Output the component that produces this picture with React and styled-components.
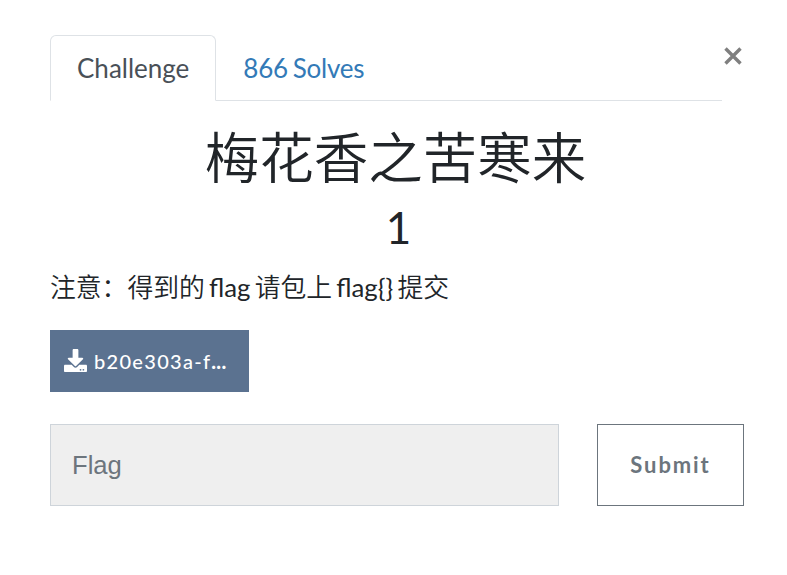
import React from "react";
import styled, { createGlobalStyle } from "styled-components";
import { FaDownload } from "react-icons/fa";

const Global = createGlobalStyle`
  * { box-sizing: border-box; }
  body { margin: 0; background: #fff; color: #212529; font-family: Lato, "Noto Sans CJK SC", sans-serif; }
`;
const Dialog = styled.main`
  width: 787px; height: 575px; padding: 35px 43px 0 50px; overflow: hidden;
`;
const Header = styled.header`
  display: flex; align-items: flex-start; height: 66px;
`;
const Tabs = styled.nav`
  display: flex; width: 672px; height: 66px; border-bottom: 1px solid #dee2e6;
`;
const Tab = styled.a`
  height: 66px; padding: 0 26px; font-size: 26px; line-height: 64px; white-space: nowrap;
  letter-spacing: ${p => (p.$active ? "0" : "-.2px")}; word-spacing: -1.8px;
  border: 1px solid ${p => (p.$active ? "#dee2e6" : "transparent")};
  border-bottom-color: ${p => (p.$active ? "#fff" : "transparent")};
  border-radius: 6px 6px 0 0;
  color: ${p => (p.$active ? "#495057" : "#337ab7")};
`;
const Close = styled.button`
  width: 20px; height: 20px; margin: 11px 0 0 1px; padding: 0; border: 0; background: none; color: #7f7f7f; display: flex;
`;
const Title = styled.h2`
  margin: 21px 3px 0 0; text-align: center; font-size: 54.5px; line-height: 66px; font-weight: 350;
  font-family: "Noto Sans CJK SC DemiLight", "Noto Sans CJK SC", sans-serif;
`;
const Value = styled.h3`
  margin: 12px 0 0 3px; text-align: center; font-size: 44px; line-height: 54px; font-weight: 400;
`;
const Note = styled.p`
  margin: 12px 0 0; font-size: 25.8px; line-height: 40px; white-space: pre; word-spacing: -2.4px; font-weight: 400;
`;
const Han = styled.span`
  font-family: "Noto Sans CJK SC DemiLight", "Noto Sans CJK SC", sans-serif; font-weight: 350;
`;
const FileButton = styled.a`
  display: flex; align-items: center; width: 199px; height: 62px; margin-top: 23px; padding-left: 14px; gap: 7px;
  background: #5b7290; color: #fff; font-size: 20px; letter-spacing: 1.3px; font-weight: 500;
`;
const DownloadIcon = styled(FaDownload)`
  margin-bottom: 2px;
`;
const Dots = styled.span`
  font-weight: 900; letter-spacing: .3px;
`;
const Form = styled.form`
  display: flex; justify-content: space-between; margin-top: 32px;
`;
const Input = styled.input`
  width: 509px; height: 82px; padding: 0 21px; border: 1px solid #ced4da; border-radius: 0; background: #efefef;
  font: 25.6px "Liberation Sans", sans-serif;
  &::placeholder { color: #6c757d; opacity: 1; }
`;
const Submit = styled.button`
  width: 147px; height: 82px; padding: 0 0 2px; border: 1px solid #6c757d; background: #fff; color: #6c757d;
  font: 700 22px Lato, sans-serif; letter-spacing: 1.9px;
`;

export default function App() {
  return (
    <Dialog>
      <Global />
      <Header>
        <Tabs><Tab $active>Challenge</Tab><Tab>866 Solves</Tab></Tabs>
        <Close type="button" aria-label="Close">
          <svg width="20" height="20" viewBox="0 0 20 20"><path d="M2.5 2.5 17.5 17.5M17.5 2.5 2.5 17.5" stroke="currentColor" strokeWidth="3.4" /></svg>
        </Close>
      </Header>
      <Title>梅花香之苦寒来</Title>
      <Value>1</Value>
      <Note><Han>注意：得到的</Han> flag <Han>请包上</Han> flag{"{}"} <Han>提交</Han></Note>
      <FileButton><DownloadIcon size={23} /><span>b20e303a-f<Dots>...</Dots></span></FileButton>
      <Form><Input placeholder="Flag" /><Submit type="button">Submit</Submit></Form>
    </Dialog>
  );
}
